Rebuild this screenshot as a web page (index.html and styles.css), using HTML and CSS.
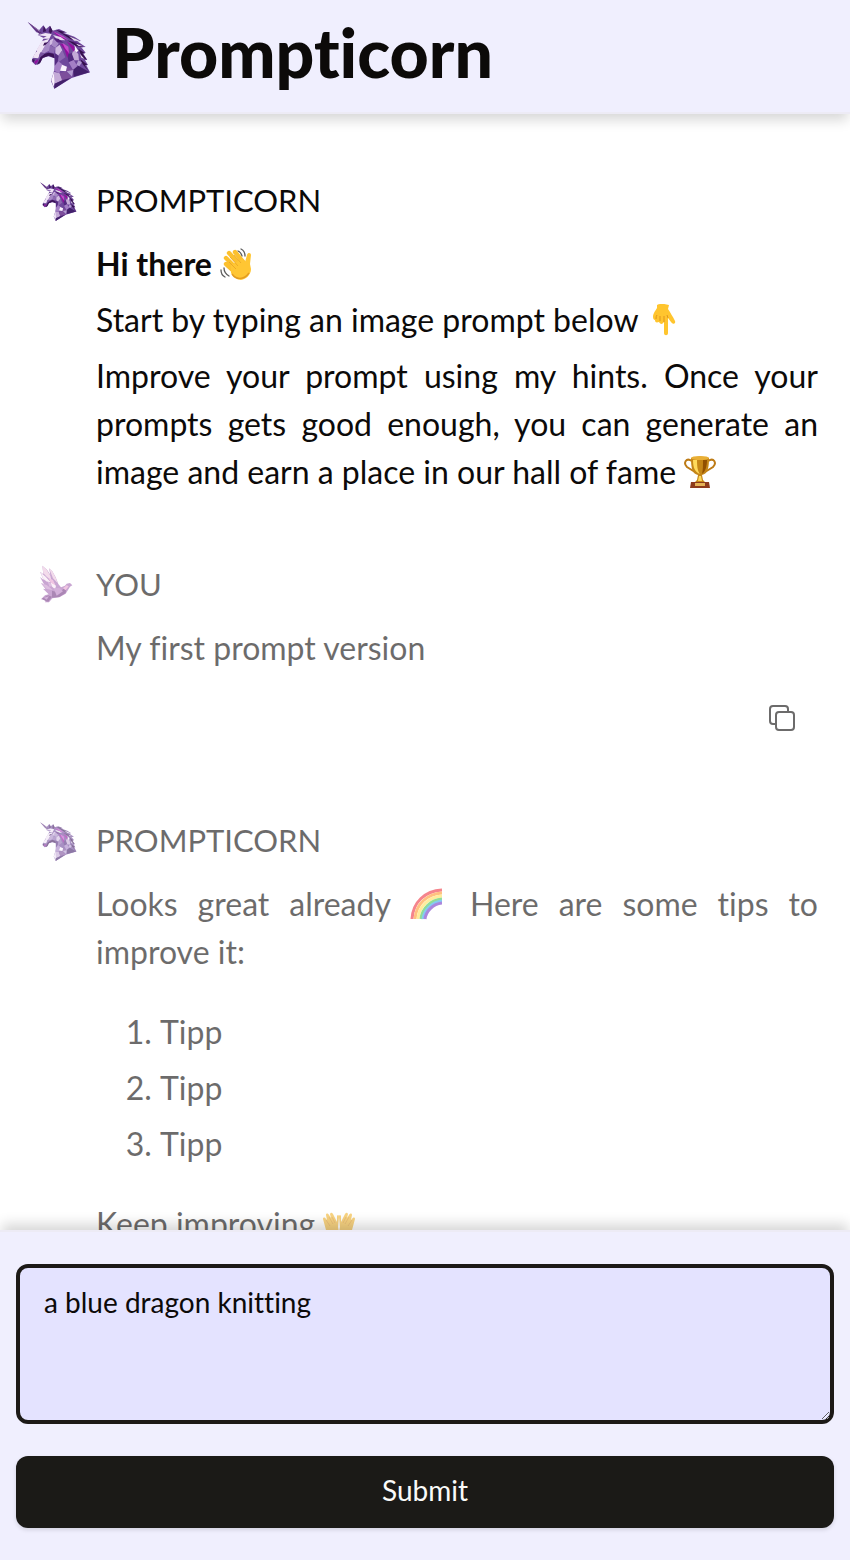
FILE: index.html
```html
<!DOCTYPE html>
<html lang="en">
<head>
<meta charset="utf-8">
<meta name="viewport" content="width=device-width, initial-scale=1">
<title>Prompticorn</title>
<link rel="stylesheet" href="styles.css">
</head>
<body>
<svg class="defs" aria-hidden="true">
  <symbol id="unicorn" viewBox="27 30 216 216">
    <path fill="#6f489c" d="M38 36L72 61 85 46 93 57 105 47 112 62 132 57 157 68 145 68 178 80 198 93 187 94 212 111 199 112 212 128 205 131 217 150 210 150 219 165 214 166 225 187 170 204 118 236 108 213 119 176 119 145 99 139 83 144 73 162 61 165 50 154 53 144 69 115 80 97 86 84 68 75 78 70 64 67Z"/>
    <path fill="#5c2f7b" d="M38 36L72 61 80 69 73 72Z"/>
    <path fill="#b69bc7" d="M44 41L72 61 75 66Z"/>
    <path fill="#efe4f5" d="M68 76L91 69 110 72 103 86 80 86 95 79ZM80 94L103 86 92 106 80 126 64 141 66 118ZM53 143L62 126 76 125 70 145Z"/>
    <path fill="#3b1357" d="M86 47L94 64 84 66ZM105 47L113 62 107 71 101 65ZM88 98L104 96 92 105 84 107ZM51 147L60 149 55 158ZM76 142L89 131 101 128 116 131 119 145 102 137 83 144 76 158 66 164 72 152Z"/>
    <path fill="#a789c6" d="M91 105L106 91 105 121 88 130 78 128ZM116 86L131 101 121 114 108 105Z"/>
    <path fill="#d2bce2" d="M105 91L116 84 111 101 104 107ZM121 114L134 104 142 121 131 137 121 130Z"/>
    <path fill="#8c69b1" d="M105 106L121 114 117 130 101 126ZM142 121L151 142 130 157 129 137Z"/>
    <path fill="#542b80" d="M119 130L131 138 128 154 119 168ZM157 133L174 128 177 151 161 157Z"/>
    <path fill="#7a559f" d="M76 127L90 130 78 139 71 144Z"/>
    <path fill="#a47fc5" d="M119 168L130 154 142 163 133 190 117 182ZM161 157L176 150 187 168 174 180Z"/>
    <path fill="#faf3fd" d="M141 164L156 170 153 184 135 182ZM178 104L190 122 181 130ZM109 211L117 185 123 204 116 230Z"/>
    <path fill="#c4aad7" d="M116 185L134 190 143 210 119 221ZM176 118L190 132 192 151 178 151 171 132Z"/>
    <path fill="#7d4e9b" d="M134 190L153 184 170 202 143 216ZM156 170L173 179 176 198 155 184Z"/>
    <path fill="#43206b" d="M175 179L190 167 224 187 176 200ZM119 221L144 210 167 204 118 236Z"/>
    <path fill="#b29ad0" d="M190 151L201 157 193 169 184 164ZM155 184L175 180 171 200Z"/>
    <path fill="#930f9e" d="M112 64L138 76 154 89 139 87ZM134 100L151 105 163 123 157 144 149 120ZM155 94L179 110 177 126ZM58 155L69 148 69 154 61 163Z"/>
    <path fill="#c44ecb" d="M114 64L144 78 161 91 138 80ZM142 98L160 110 162 130 150 115Z"/>
    <path fill="#35104e" d="M122 59L151 66 141 69 172 82 193 94 167 88ZM157 91L184 99 205 112 184 109ZM190 116L210 130 202 130 216 149 202 143ZM196 148L217 164 209 165 221 184 203 163Z"/>
    <path fill="#e6d9ef" d="M114 75L137 81 151 91 128 90ZM162 79L184 88 196 94 178 92ZM181 100L203 109 191 108ZM195 132L208 146 199 143Z"/>
    <path fill="#56227d" d="M115 84L130 86 146 98 126 96ZM170 92L186 98 198 103 181 101Z"/>
  </symbol>
  <symbol id="dove" viewBox="27 30 126 126">
    <path fill="#a66cb5" d="M40 32L54 44 64 59 60 40 70 49 80 67 88 87 96 97 108 92 113 86 123 84 130 91 123 95 110 116 91 127 70 130 60 142 48 142 51 135 36 133 48 121 59 118 42 101 50 103 36 85 45 88 33 66 44 75 33 50 43 58Z"/>
    <path fill="#ecc4df" d="M40 32L53 44 64 62 67 76 54 66 43 55ZM60 40L70 49 80 68 86 84 72 70Z"/>
    <path fill="#fae8f5" d="M34 52L50 65 65 82 54 80 43 72ZM68 76L81 93 78 103 64 90Z"/>
    <path fill="#c895cd" d="M36 84L54 91 71 105 53 102ZM55 77L70 91 62 96Z"/>
    <path fill="#743885" d="M69 107L91 113 102 103 113 92 110 114 91 126 69 128ZM38 131L57 121 69 125 58 140 51 139Z"/>
    <path fill="#b77dc2" d="M74 100L91 99 102 109 83 122ZM44 128L60 124 53 134Z"/>
    <path fill="#e7a0cf" d="M58 68L72 75 79 91 66 84ZM102 100L113 91 119 94 110 106Z"/>
  </symbol>
</svg>

<header class="topbar">
  <svg class="topbar-logo" aria-hidden="true"><use href="#unicorn"/></svg>
  <h1 class="topbar-title">Prompticorn</h1>
</header>

<main class="chat">
  <article class="message">
    <svg class="avatar" aria-hidden="true"><use href="#unicorn"/></svg>
    <div class="content">
      <h2 class="author">PROMPTICORN</h2>
      <p><strong>Hi there</strong>
        <svg class="emoji" viewBox="0 0 32 32" role="img" aria-label="waving hand">
          <path fill="none" stroke="#5c5c5c" stroke-width="1.3" stroke-linecap="round" d="M18 3q3 1 4 5M21 1q4 2 4 7M4 20q0 5 5 8M1 22q0 5 4 7"/>
          <path fill="none" stroke="#fcc02e" stroke-width="4.4" stroke-linecap="round" d="M6 16l10 9M6 10l13 13M9 5l13 14M15 4l9 11"/>
          <path fill="#ffc633" d="M11 17L22 11l3 3 2-7c1-3 4-2 4 0l-1 9 1 5c0 6-5 10-10 11-4 0-8-3-10-7z"/>
          <path fill="none" stroke="#e8a325" stroke-width=".8" d="M9 14l7 7M10 9l8 9M14 7l7 8"/>
          <path fill="none" stroke="#e39c20" stroke-width="1.4" d="M12 26c4 6 12 6 17-1"/>
        </svg>
      </p>
      <p>Start by typing an image prompt below
        <svg class="emoji" viewBox="-3 0 32 32" role="img" aria-label="pointing down">
          <path fill="#ffc52e" d="M8 1c4-2 8-1 12 0l-1 4c2 3 5 8 7 12 1 3-2 4-4 1l-3-4v15c0 3-4 3-4 0V18c-2 3-4 2-5 0-3 1-4 0-4-2-1 0-2-1-2-3 0-4 3-7 4-9z"/>
          <path fill="none" stroke="#df941d" d="M7 15q0-3 1-4M11 17v-5M15 18v-6M19 14l-1-3"/>
        </svg>
      </p>
      <p>Improve your prompt using my hints. Once your prompts gets good enough, you can generate an image and earn a place in our hall of fame
        <svg class="emoji" viewBox="0 0 32 32" role="img" aria-label="trophy">
          <path fill="none" stroke="#bd7b16" stroke-width="2" d="M8 5C2 1-1 7 3 11l8 5M24 5c6-4 9 2 5 6l-8 5"/>
          <path fill="#c58617" d="M7 2q9-3 18 0c0 9-1 16-7 17l1 5 3 3H10l3-3 1-5C8 18 7 11 7 2z"/>
          <path fill="#ffda5c" d="M9 4h4c0 8 1 12 3 14-5-2-7-6-7-14zM15 20h2l1 5h-4z"/>
          <path fill="#925000" d="M19 4h4c0 7-2 12-5 14 1-4 1-9 1-14z"/>
          <ellipse cx="16" cy="2" rx="9" ry="2" fill="#e9af36"/>
          <path fill="#8e3c1c" d="M7 26h18l1 6H6z"/><path fill="#e5b458" d="M11 27h10v3H11z"/>
        </svg>
      </p>
    </div>
  </article>

  <article class="message faded">
    <svg class="avatar" aria-hidden="true"><use href="#dove"/></svg>
    <div class="content">
      <h2 class="author">YOU</h2>
      <p>My first prompt version</p>
      <div class="actions">
        <button class="copy" type="button" aria-label="Copy prompt">
          <svg viewBox="0 0 28 28" fill="none" stroke="currentColor" stroke-width="2" stroke-linejoin="round"><rect x="8" y="8" width="18" height="18" rx="3"/><path d="M8 20H5a3 3 0 0 1-3-3V5a3 3 0 0 1 3-3h12a3 3 0 0 1 3 3v3"/></svg>
        </button>
      </div>
    </div>
  </article>

  <article class="message faded">
    <svg class="avatar" aria-hidden="true"><use href="#unicorn"/></svg>
    <div class="content">
      <h2 class="author">PROMPTICORN</h2>
      <p>Looks great already
        <svg class="emoji" viewBox="0 0 32 32" role="img" aria-label="rainbow">
          <g fill="none" stroke-width="3">
            <path stroke="#ef3340" d="M2 31C3 14 15 3 32 2"/>
            <path stroke="#ff982d" d="M5 31C6 16 17 6 32 5"/>
            <path stroke="#ffe15a" d="M8 31C9 18 19 9 32 8"/>
            <path stroke="#49c84e" d="M11 31C12 20 21 12 32 11"/>
            <path stroke="#35a8e8" d="M13 31C14 22 22 14 32 13"/>
            <path stroke="#7437c8" d="M15 31C16 23 23 16 32 15"/>
          </g>
        </svg>
        Here are some tips to improve it:</p>
      <ol class="tips">
        <li>Tipp</li>
        <li>Tipp</li>
        <li>Tipp</li>
      </ol>
      <p>Keep improving
        <svg class="emoji" viewBox="0 0 32 32" role="img" aria-label="open hands">
          <g id="hand"><path fill="#f5b72e" d="M14 30c-5 0-9-3-11-8L0 11c0-2 2-2 3 0l1 1-1-5c0-2 2-2 3 0l2 3-1-4c1-2 2-1 3 0l4 8 0-6c1-2 2-1 2 1l-1 10c1 5 1 9-1 11z"/><path fill="none" stroke="#d99020" stroke-width=".8" d="M3 12l4 6M6 9l4 7M9 9l3 6"/></g>
          <use href="#hand" transform="matrix(-1 0 0 1 32 0)"/>
        </svg>
      </p>
    </div>
  </article>
</main>

<form class="composer">
  <textarea class="prompt" aria-label="Image prompt">a blue dragon knitting</textarea>
  <button class="submit" type="button">Submit</button>
</form>
</body>
</html>
```
FILE: styles.css
```css
* {
  box-sizing: border-box;
}

body {
  margin: 0;
  height: 100vh;
  display: flex;
  flex-direction: column;
  overflow: hidden;
  background: #fff;
  color: #0c0a09;
  font-family: Lato, "Open Sans", sans-serif;
  font-size: 32px;
  line-height: 48px;
  font-variant-ligatures: none;
}

.defs {
  position: absolute;
  width: 0;
  height: 0;
}

.topbar {
  display: flex;
  align-items: flex-start;
  gap: 16px;
  padding: 20px 24px;
  background: #f0effe;
  border-bottom: 2px solid #edebf5;
  box-shadow: 0 8px 12px -2px rgba(0, 0, 0, 0.16);
  z-index: 1;
}

.topbar-logo {
  width: 72px;
  height: 72px;
}

.topbar-title {
  margin: 0;
  font-size: 68px;
  line-height: 64px;
  font-weight: 900;
}

.chat {
  flex: 1;
  min-height: 0;
  overflow: hidden;
  display: flex;
  flex-direction: column;
  gap: 64px;
  padding: 62px 32px 0 38px;
}

.message {
  flex: none;
  display: grid;
  grid-template-columns: 42px 1fr;
  column-gap: 16px;
  align-items: start;
}

.faded {
  opacity: 0.6;
}

.avatar {
  width: 42px;
  height: 42px;
  margin-top: 5px;
}

.author {
  margin: 0 0 16px;
  font-size: 31px;
  font-weight: 400;
}

.content p {
  margin: 0;
  text-align: justify;
}

.content p + p {
  margin-top: 8px;
}

.emoji {
  width: 32px;
  height: 32px;
  margin-right: 8px;
  vertical-align: -4px;
}

.actions {
  display: flex;
  justify-content: flex-end;
  padding: 16px 8px 4px;
}

.copy {
  display: flex;
  padding: 16px 14px;
  border: 0;
  background: none;
  color: inherit;
}

.copy svg {
  width: 28px;
  height: 28px;
}

.tips {
  display: grid;
  gap: 8px;
  margin: 32px 0;
  padding-left: 64px;
}

.composer {
  display: flex;
  flex-direction: column;
  gap: 32px;
  padding: 32px 16px;
  background: #f0effe;
  border-top: 2px solid #edebf5;
  box-shadow: 0 -8px 12px -2px rgba(0, 0, 0, 0.16);
  z-index: 1;
}

.prompt {
  width: 100%;
  height: 160px;
  padding: 14px 24px;
  border: 4px solid #1c1917;
  border-radius: 12px;
  outline: 0;
  background: #e4e3ff;
  color: inherit;
  font: inherit;
  font-size: 28px;
  line-height: 40px;
}

.submit {
  height: 72px;
  padding: 0 24px 4px;
  border: 0;
  border-radius: 12px;
  background: #1b1a17;
  box-shadow: 0 2px 4px rgba(0, 0, 0, 0.12);
  color: #fafaf9;
  font: inherit;
  font-size: 28px;
  line-height: 40px;
}
```
